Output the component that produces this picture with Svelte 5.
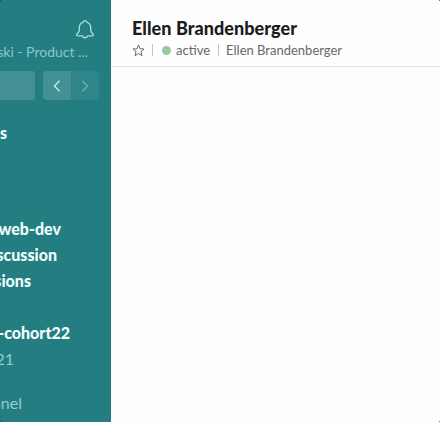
<script>
  const channels = [
    { name: 's', end: 7, height: 26, unread: true },
    { name: '', end: 0, height: 70 },
    { name: 'web-dev', end: 61, height: 26, unread: true },
    { name: 'scussion', end: 57, height: 26, unread: true },
    { name: 'sions', end: 31, height: 26, unread: true },
    { name: '', end: 0, height: 26 },
    { name: '-cohort22', end: 70, height: 26, unread: true },
    { name: '21', end: 14, height: 26 },
    { name: '', end: 0, height: 18 },
    { name: 'nnel', end: 22, height: 26 }
  ];
</script>

<div class="app">
  <aside>
    <div class="top">
      <svg class="bell" viewBox="0 0 20 22" width="20" height="22" fill="none" stroke="#a4dfe1" stroke-width="1.35" stroke-linejoin="round" stroke-linecap="round">
        <path d="M8.3 3.2C8.3 1 11.7 1 11.7 3.2C14.5 4 15.7 6.1 15.7 9V11.6C15.7 13.4 18.3 14.4 18.3 15.8C18.3 16.6 17.7 16.8 17 16.8H12.4C12.2 19.4 7.8 19.4 7.6 16.8H3C2.3 16.8 1.7 16.6 1.7 15.8C1.7 14.4 4.3 13.4 4.3 11.6V9C4.3 6.1 5.5 4 8.3 3.2Z" />
      </svg>
    </div>
    <div class="user"><span>ski - Product ...</span></div>
    <div class="tools">
      <div class="search"></div>
      <div class="history">
        <button aria-label="Back"><svg width="8" height="12" viewBox="0 0 8 12"><path d="M6.5 .8L1.5 6L6.5 11.2" /></svg></button>
        <button class="next" aria-label="Forward"><svg width="8" height="12" viewBox="0 0 8 12"><path d="M1.5 .8L6.5 6L1.5 11.2" /></svg></button>
      </div>
    </div>
    <nav>
      {#each channels as c}
        <div class="row" class:unread={c.unread} style="width:{c.end}px;height:{c.height}px"><span>{c.name}</span></div>
      {/each}
    </nav>
  </aside>
  <main>
    <header>
      <h1>Ellen Brandenberger</h1>
      <div class="meta">
        <svg width="13" height="13" viewBox="0 0 13 13" fill="none" stroke="#68696b" stroke-width="1" stroke-linejoin="round"><path d="M6.5 .9L8 4.7L12.1 5L9 7.6L10 11.7L6.5 9.5L3 11.7L4 7.6L.9 5L5 4.7Z" /></svg>
        <i class="bar first"></i>
        <i class="dot"></i>
        <span class="active">active</span>
        <i class="bar second"></i>
        <span class="full">Ellen Brandenberger</span>
      </div>
    </header>
  </main>
  <i class="corner top-right"></i>
  <i class="corner bottom-right"></i>
  <i class="corner top-left"></i>
  <i class="corner bottom-left"></i>
</div>

<style>
  :global(body) { margin: 0; background: #fff; }
  .app { position: relative; display: flex; width: 440px; height: 422px; overflow: hidden; font-family: Lato, sans-serif; background: #fefefe; }
  aside { width: 111px; flex: none; background: #247d81; overflow: hidden; }
  .top { height: 42px; display: flex; justify-content: flex-end; padding: 19px 16px 0 0; box-sizing: border-box; }
  .bell { display: block; }
  .user { display: flex; justify-content: flex-end; width: 88px; height: 20px; line-height: 20px; font-size: 14px; color: #88c9ce; white-space: pre; }
  .tools { display: flex; gap: 8px; margin-top: 9px; }
  .search { width: 35px; height: 29px; background: #439195; border-radius: 0 3px 3px 0; }
  .history { display: flex; width: 56px; height: 29px; border-radius: 4px; overflow: hidden; }
  button { width: 28px; border: 0; padding: 0; display: flex; align-items: center; justify-content: center; background: #439195; }
  button.next { background: #30858a; }
  button path { fill: none; stroke: #b4e8e8; stroke-width: 1.6; }
  button.next path { stroke: #65adb0; }
  nav { padding-top: 19px; }
  .row { display: flex; justify-content: flex-end; align-items: center; white-space: nowrap; font-size: 16px; color: #94cdd0; }
  .unread { color: #effdfd; font-weight: 900; }
  main { flex: 1; }
  header { height: 67px; box-sizing: border-box; border-bottom: 1px solid #e2e2e2; padding: 17px 0 0 21px; }
  h1 { margin: 0 0 1px; font-size: 18px; line-height: 22px; font-weight: 900; letter-spacing: .05px; color: #1d1c1d; white-space: nowrap; }
  .meta { display: flex; align-items: center; height: 20px; font-size: 13px; color: #67686a; white-space: nowrap; }
  .meta svg { flex: none; }
  .bar { width: 1px; height: 12px; background: #c4c4c4; }
  .first { margin: 0 9px 0 7px; }
  .dot { width: 9px; height: 9px; border-radius: 50%; background: #9bc79f; margin-right: 5px; }
  .second { margin: 0 7px 0 8px; }
  .corner { position: absolute; width: 1px; height: 1px; background: #777; }
  .top-right { top: 0; right: 0; }
  .bottom-right { bottom: 0; right: 0; }
  .top-left { top: 0; left: 0; background: #0c4b50; }
  .bottom-left { bottom: 0; left: 0; background: #0c4b50; }
</style>
